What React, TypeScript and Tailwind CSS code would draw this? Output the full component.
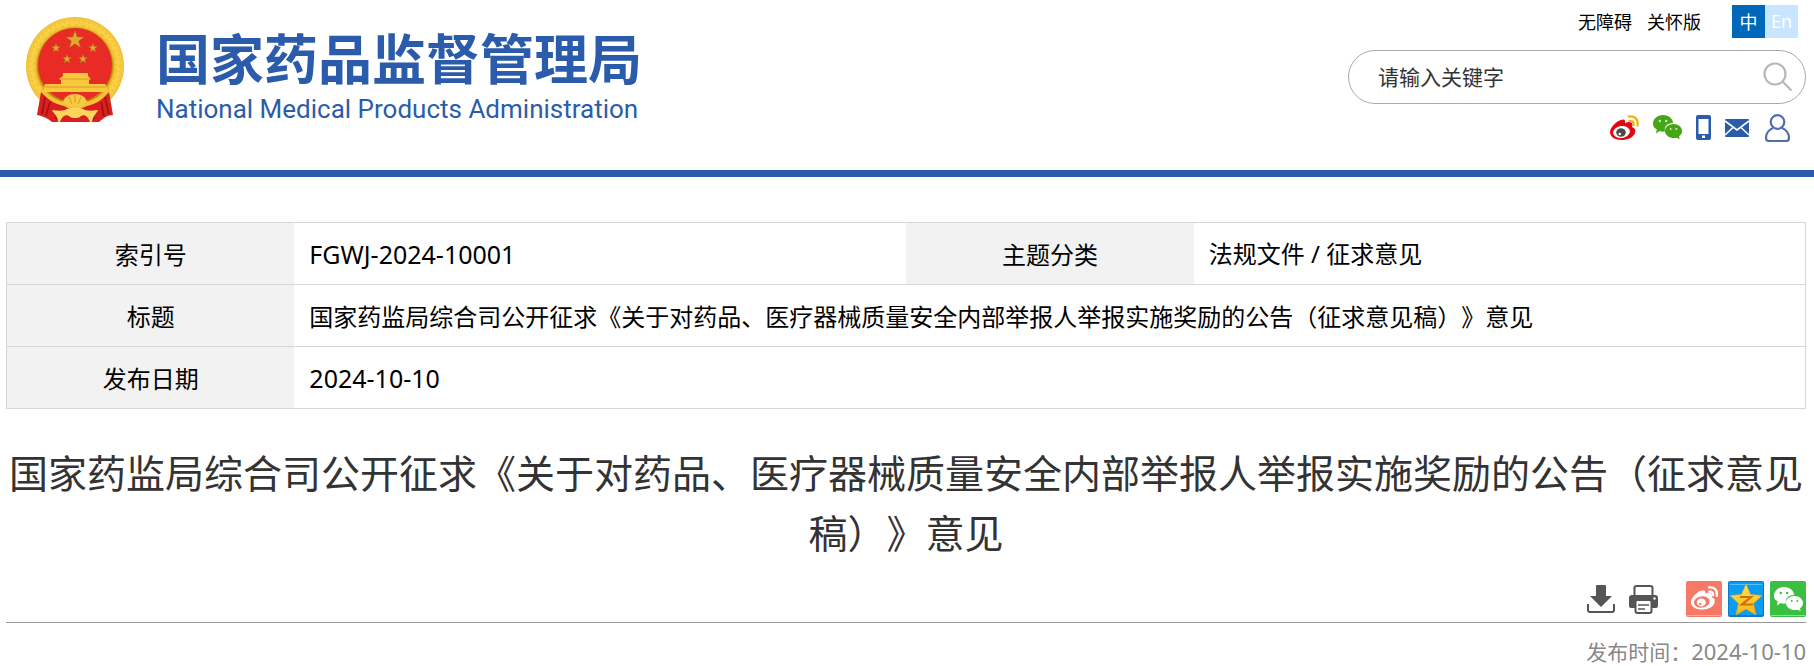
import type { ReactNode } from "react";

const title =
  "国家药监局综合司公开征求《关于对药品、医疗器械质量安全内部举报人举报实施奖励的公告（征求意见稿）》意见";

const star = (cx: number, cy: number, r: number) =>
  Array.from({ length: 10 }, (_, i) => {
    const radius = i % 2 === 0 ? r : r * 0.4;
    const angle = (Math.PI / 5) * i - Math.PI / 2;
    return `${cx + radius * Math.cos(angle)},${cy + radius * Math.sin(angle)}`;
  }).join(" ");

const Emblem = () => (
  <svg viewBox="0 0 98 105" className="h-[105px] w-[98px] shrink-0" aria-hidden="true">
    <defs>
      <radialGradient id="ring" cx="50%" cy="50%" r="50%">
        <stop offset="0.76" stopColor="#b8860f" />
        <stop offset="0.8" stopColor="#f0bc2c" />
        <stop offset="0.9" stopColor="#fbd548" />
        <stop offset="1" stopColor="#f0bd38" />
      </radialGradient>
    </defs>
    <circle cx="49" cy="49" r="49" fill="url(#ring)" />
    <circle cx="49" cy="49" r="45" fill="none" stroke="#e2a81f" strokeWidth="2" strokeDasharray="2 3" opacity="0.3" />
    <circle cx="49" cy="49" r="41" fill="none" stroke="#fbe06a" strokeWidth="2" strokeDasharray="3 4" opacity="0.4" />
    <circle cx="49" cy="48" r="37" fill="#e92b25" />
    <g fill="#e3a92e" stroke="#a8661c" strokeWidth="0.5">
      <polygon points={star(49, 23, 9.5)} />
      <polygon points={star(30, 31, 4.8)} />
      <polygon points={star(67, 31, 4.8)} />
      <polygon points={star(41, 42, 4.8)} />
      <polygon points={star(57, 42, 4.8)} />
    </g>
    <path d="M37 56h25v3l3 3-2 1v4h16l2 3v5H18v-5l1-3h16v-4l-2-1 4-3z" fill="#f8c93c" />
    <path d="M35 62h29M19 70h61" stroke="#dc9c22" strokeWidth="1" fill="none" />
    {/* ribbon */}
    <path d="M15 75c6 5 13 8 20 11h28c8-3 15-6 20-11l4 23c-6 0-9 3-14 7H26c-5-4-9-6-15-7z" fill="#d9201f" />
    <path d="M19 80l-3 17M24 85l-4 14M79 80l4 17M75 85l3 14M29 100l4 4M69 100l-4 4" stroke="#9e1012" strokeWidth="1.5" fill="none" />
    <path d="M14 73c9 4 14 10 24 12h22c10-2 15-8 24-12-5 8-13 14-23 16l-5 2H42l-4-2c-10-2-19-8-24-16z" fill="#f5c236" />
    <path d="M37 85c1-5 6-8 12-8s11 3 12 8l-6 4H43z" fill="#f8cb42" />
    <path d="M49 78v8M43 80l3 7M55 80l-3 7" stroke="#d99524" strokeWidth="1" />
    <path d="M26 93c7 1 12 1 15-1 4-2 12-2 16 0 3 2 8 2 15 1-2 4-5 6-6 12h-2c-2-5-5-8-9-6-2 2-4 2-6 2s-4 0-6-2c-4-2-7 1-9 6h-2c0-6-4-8-6-12z" fill="#fbd65a" />
  </svg>
);

const WeiboShape = ({ body, eye, pupil, wave }: { body: string; eye: string; pupil: string; wave: string }) => (
  <>
    <path
      d="M11 5c2-1 5-1 4 3 4-2 9-1 7 4 3 1 4 3 3 6-2 5-8 7-13 7C5 25 0 22 0 17 0 13 6 6 11 5z"
      fill={body}
    />
    <ellipse cx="11.5" cy="17" rx="8.5" ry="6" transform="rotate(-8 11.5 17)" fill={eye} />
    <ellipse cx="11" cy="17.5" rx="4.8" ry="4.2" fill={pupil} />
    <circle cx="9.8" cy="19" r="1.3" fill={eye} />
    <path d="M19 1.5c6-1 9.5 3 8.5 9M19.5 6c3-.5 4.5 1.5 4 4" fill="none" stroke={wave} strokeWidth="2.4" strokeLinecap="round" />
  </>
);

const WechatShape = ({ fill, eyes }: { fill: string; eyes: string }) => (
  <>
    <path d="M10 0c6 0 10 4 10 8-6 0-9 4-8 8.5-2 .3-4 .1-5.500-.4L3 18.500l.8-4C1 13 0 11 0 8.500 0 4 4.500 0 10 0z" fill={fill} />
    <path d="M20.500 9c4.800 0 8.500 3 8.500 7 0 2.200-1 4-3 5.300l.6 3-3-1.500c-6 1.300-11.600-2-11.600-6.800 0-4 3.700-7 8.500-7z" fill={fill} />
    <g fill={eyes}>
      <circle cx="6.8" cy="6" r="1.2" />
      <circle cx="13.2" cy="6" r="1.2" />
      <circle cx="17.7" cy="14" r="1" />
      <circle cx="23.3" cy="14" r="1" />
    </g>
  </>
);

const WeiboIcon = () => (
  <svg viewBox="0 0 29 26" className="h-[26px] w-[29px]" aria-hidden="true">
    <WeiboShape body="#e30613" eye="#fff" pupil="#4a4a4a" wave="#f0b41c" />
  </svg>
);

const WechatIcon = () => (
  <svg viewBox="0 0 29 25" className="h-[25px] w-[29px]" aria-hidden="true">
    <WechatShape fill="#46a716" eyes="#d9f0cc" />
  </svg>
);

const PhoneIcon = () => (
  <svg viewBox="0 0 15 25" className="h-[25px] w-[15px]" aria-hidden="true">
    <path
      fillRule="evenodd"
      d="M2 0h11a2 2 0 0 1 2 2v21a2 2 0 0 1-2 2H2a2 2 0 0 1-2-2V2a2 2 0 0 1 2-2zM2.500 4v15h10V4zM6 20.500v2.500h3v-2.500z"
      fill="#2b5cab"
    />
  </svg>
);

const MailIcon = () => (
  <svg viewBox="0 0 24 18" className="h-[18px] w-[24px]" aria-hidden="true">
    <rect width="24" height="18" rx="1" fill="#2b5cab" />
    <path d="M0 2l12 9L24 2M0 16l8-7.500M24 16l-8-7.500" fill="none" stroke="#fff" strokeWidth="1.600" />
  </svg>
);

const UserIcon = () => (
  <svg viewBox="0 0 25 28" className="h-[28px] w-[25px]" aria-hidden="true">
    <g fill="none" stroke="#4f6db3" strokeWidth="2.2">
      <circle cx="12.5" cy="8" r="6.8" />
      <path d="M8 14c-4 1.500-7 5.500-7 10 0 2 1 3 3 3h17c2 0 3-1 3-3 0-4.500-3-8.500-7-10" />
    </g>
  </svg>
);

const SearchIcon = () => (
  <svg viewBox="0 0 30 30" className="h-[30px] w-[30px]" aria-hidden="true">
    <g fill="none" stroke="#b8b8b8" strokeWidth="2.2">
      <circle cx="12" cy="12" r="10.5" />
      <path d="M19.500 19.500l9 9" />
    </g>
  </svg>
);

const DownloadIcon = () => (
  <svg viewBox="0 0 28 28" className="h-[28px] w-[28px]" aria-hidden="true">
    <path d="M9 1q0-1 1-1h8q1 0 1 1v10h6L14 22 3 11h6z" fill="#555" />
    <path d="M1 19v6q0 2 2 2h22q2 0 2-2v-6" fill="none" stroke="#555" strokeWidth="2" />
  </svg>
);

const PrinterIcon = () => (
  <svg viewBox="0 0 29 29" className="h-[29px] w-[29px]" aria-hidden="true">
    <path d="M5.500 11V3q0-2 2-2h14q2 0 2 2v8" fill="#fff" stroke="#555" strokeWidth="2" />
    <path d="M3 10h23q3 0 3 3v8q0 2-2 2h-4v-8H6v8H2q-2 0-2-2v-8q0-3 3-3z" fill="#555" />
    <rect x="6.5" y="15" width="16" height="13" rx="2" fill="#fff" stroke="#555" strokeWidth="2" />
    <path d="M9 20h11M9 24h7" stroke="#555" strokeWidth="1.500" />
    <circle cx="25.5" cy="13.5" r="1.2" fill="#fff" />
  </svg>
);

const ShareWeibo = () => (
  <svg viewBox="0 0 36 36" className="h-9 w-9" aria-hidden="true">
    <rect width="36" height="36" rx="2" fill="#f67968" />
    <path d="M1 34.500h34" stroke="#fbb3a8" />
    <g transform="translate(5 5) scale(0.94)">
      <WeiboShape body="#fff" eye="#f67968" pupil="#fff" wave="#fff" />
    </g>
  </svg>
);

const ShareQzone = () => (
  <svg viewBox="0 0 36 36" className="h-9 w-9" aria-hidden="true">
    <defs>
      <linearGradient id="gold" x1="0" y1="0" x2="0" y2="1">
        <stop offset="0" stopColor="#ffe35a" />
        <stop offset="1" stopColor="#fbb50c" />
      </linearGradient>
    </defs>
    <rect width="36" height="36" rx="2" fill="#0a79cc" />
    <rect x="1" y="1" width="34" height="33" rx="1" fill="#0b9df2" />
    <path d="M2 3.500h32" stroke="#55c0fb" />
    <path
      d="M18 3l4.500 10.500L34 14.500l-8.500 8 2.500 11.500-10-6-10 6 2.500-11.500L2 14.500l11.500-1z"
      fill="url(#gold)"
      stroke="#f1a20a"
      strokeWidth="0.6"
    />
    <path d="M12 16h11l-9 7.500h11" fill="none" stroke="#c9730a" strokeWidth="2.2" />
  </svg>
);

const ShareWechat = () => (
  <svg viewBox="0 0 36 36" className="h-9 w-9" aria-hidden="true">
    <rect width="36" height="36" rx="2" fill="#3bbf42" />
    <path d="M1 34.500h34" stroke="#93de96" />
    <g transform="translate(4 6)">
      <WechatShape fill="#fff" eyes="#3bbf42" />
    </g>
  </svg>
);

const IconLink = ({ label, children }: { label: string; children: ReactNode }) => (
  <a href="#" aria-label={label} className="block">
    {children}
  </a>
);

const Header = () => (
  <header className="flex items-start justify-between border-b-[7px] border-[#2b5cab] pr-2 pb-5 pl-[26px]">
    <a href="#" className="flex items-start gap-8 pt-[17px] text-[#2b5cab]">
      <Emblem />
      <div className="flex flex-col pt-2">
        <span className="text-[54px] leading-[64px] font-bold whitespace-nowrap">国家药品监督管理局</span>
        <span className="pt-1 font-[Roboto,'Liberation_Sans',sans-serif] text-[26px] leading-8 whitespace-nowrap">
          National Medical Products Administration
        </span>
      </div>
    </a>
    <div className="flex w-[458px] flex-col">
      <div className="flex items-center justify-end gap-[15px] pt-[5px] pr-2 text-[18px] leading-[33px]">
        <a href="#">无障碍</a>
        <a href="#">关怀版</a>
        <div className="ml-4 flex text-center text-white">
          <a href="#" className="w-[33px] bg-[#0068bb]">
            中
          </a>
          <a href="#" className="w-[33px] bg-[#c8e6ff] font-[Open_Sans,sans-serif]">
            En
          </a>
        </div>
      </div>
      <form className="mt-3 flex h-[54px] items-center rounded-full border border-[#aaa] pr-3 pl-[29px]">
        <input
          type="text"
          aria-label="请输入关键字"
          placeholder="请输入关键字"
          className="min-w-0 flex-1 text-[21px] outline-none placeholder:text-[#333]"
        />
        <button type="button" aria-label="搜索">
          <SearchIcon />
        </button>
      </form>
      <div className="flex h-[46px] items-center justify-end gap-[14px] pt-px pr-4">
        <IconLink label="微博">
          <WeiboIcon />
        </IconLink>
        <IconLink label="微信">
          <WechatIcon />
        </IconLink>
        <IconLink label="手机版">
          <PhoneIcon />
        </IconLink>
        <div className="flex items-center gap-4">
          <IconLink label="邮箱">
            <MailIcon />
          </IconLink>
          <IconLink label="个人中心">
            <UserIcon />
          </IconLink>
        </div>
      </div>
    </div>
  </header>
);

const InfoTable = () => (
  <table className="w-full table-fixed border-collapse border border-[#d6d6d6] text-[24px] leading-[30px] text-black">
    <colgroup>
      <col className="w-[16%]" />
      <col className="w-[34%]" />
      <col className="w-[16%]" />
      <col className="w-[34%]" />
    </colgroup>
    <tbody>
      <tr className="h-[62px] border-b border-[#d6d6d6]">
        <th className="bg-[#f2f2f2] font-normal">索引号</th>
        <td className="px-[15px] font-[Noto_Sans,sans-serif] text-[25px]">FGWJ-2024-10001</td>
        <th className="bg-[#f2f2f2] font-normal">主题分类</th>
        <td className="px-[15px] font-['Noto_Sans','Noto_Sans_CJK_SC',sans-serif]">法规文件 / 征求意见</td>
      </tr>
      <tr className="h-[62px] border-b border-[#d6d6d6]">
        <th className="bg-[#f2f2f2] font-normal">标题</th>
        <td className="px-[15px]" colSpan={3}>
          {title}
        </td>
      </tr>
      <tr className="h-[62px]">
        <th className="bg-[#f2f2f2] font-normal">发布日期</th>
        <td className="px-[15px] font-[Noto_Sans,sans-serif] text-[25px]" colSpan={3}>
          2024-10-10
        </td>
      </tr>
    </tbody>
  </table>
);

const App = () => (
  <div className="bg-white font-['Noto_Sans_CJK_SC',sans-serif] text-black [text-spacing-trim:space-all]">
    <Header />
    <main className="pt-[45px] pr-2 pl-[6px]">
      <InfoTable />
      <h1 className="mt-8 text-center text-[39px] leading-[60px] text-[#333]">{title}</h1>
      <div className="mt-5 flex items-center justify-end border-b border-[#999] pb-[5px]">
        <div className="flex items-center gap-[14px]">
          <button type="button" aria-label="下载">
            <DownloadIcon />
          </button>
          <button type="button" aria-label="打印">
            <PrinterIcon />
          </button>
        </div>
        <div className="ml-7 flex gap-[6px]">
          <IconLink label="分享到微博">
            <ShareWeibo />
          </IconLink>
          <IconLink label="分享到QQ空间">
            <ShareQzone />
          </IconLink>
          <IconLink label="分享到微信">
            <ShareWechat />
          </IconLink>
        </div>
      </div>
      <p className="flex items-center justify-end pt-[13px] text-[21px] leading-[31px] text-[#888]">
        发布时间：
        <time className="font-[Noto_Sans,sans-serif] text-[22px]">2024-10-10</time>
      </p>
    </main>
  </div>
);

export default App;
